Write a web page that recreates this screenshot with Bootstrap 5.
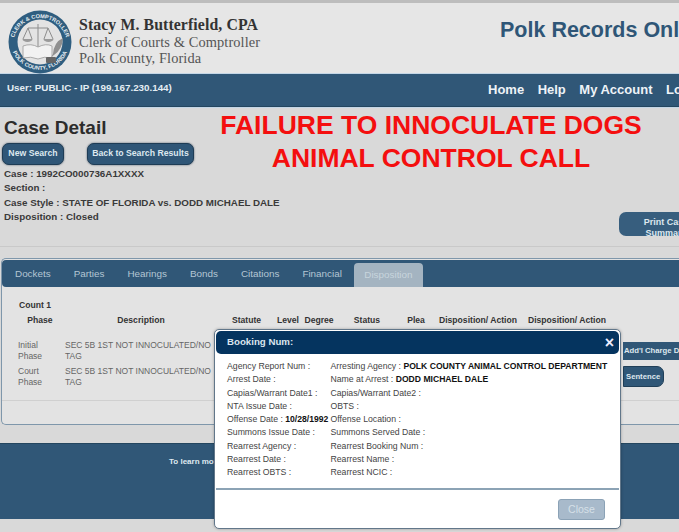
<!DOCTYPE html>
<html lang="en">
<head>
<meta charset="utf-8">
<title>Case Detail</title>
<link href="https://cdn.jsdelivr.net/npm/bootstrap@5.3.0/dist/css/bootstrap.min.css" rel="stylesheet">
<style>
html,body{height:532px;overflow:hidden}
body{background:#d9d9d9;font-family:"Liberation Sans",Arial,sans-serif;color:#333;width:679px;position:relative}
.top-strip{height:3px;background:#bdbdbd}
.site-head{height:71px;background:#e6e6e6;border-bottom:1px solid #c4d6e6}
.seal{width:64px;height:64px;margin:7px 7px 0 8px;flex:none}
.clerk{font-family:"Liberation Serif",serif;font-size:14.4px;line-height:16.7px;color:#555;padding-top:14px;letter-spacing:.1px}
.clerk b{color:#333;font-size:15.8px;letter-spacing:.1px}
.portal{font-size:21.5px;font-weight:700;color:#2f5677;position:absolute;left:500px;top:14px;white-space:nowrap}
.main-bar{height:33px;background:#305777;border-bottom:1px solid #24465f;color:#e4edf3;white-space:nowrap;overflow:hidden}
.user-line{font-size:9.8px;font-weight:700;padding:7px 0 0 7px;width:488px;flex:none}
.main-links{gap:13.5px;font-size:13px;font-weight:700;padding-top:6px;color:#eef3f7}
.main-links a{color:inherit;text-decoration:none}
.case-area{height:140px;padding:9px 0 0 4px;position:relative;border-bottom:1px solid #c9c9c9;border-top:1px solid #c4d6e6}
.case-area h1{font-size:19px;font-weight:700;color:#2c2c2c;margin:0 0 5px;line-height:21px}
.dark-btn{--bs-btn-padding-x:0;--bs-btn-padding-y:0;background:#2f5677;color:#dde8ef;border:1px solid #1e3c55;border-radius:7px;font-size:8.7px;font-weight:700;height:22px;box-shadow:0 0 2px #456;margin-right:23px}
.dark-btn:hover{background:#2f5677;color:#dde8ef}
.btn-new{width:62px;margin-left:-2px}
.btn-back{width:107px}
.case-lines{font-size:9.8px;font-weight:700;line-height:14.4px;margin-top:2px;color:#3a3a3a}
.print-btn{position:absolute;left:619px;top:104px;width:94px;height:24px;background:#375e7e;color:#dde8ef;font-size:9px;font-weight:700;line-height:11px;text-align:center;border-radius:7px 0 0 7px;padding-top:5px;overflow:hidden}
.alert-text{position:absolute;left:0;top:109px;width:862px;text-align:center;color:#f40f0f;font-size:26.5px;font-weight:700;line-height:32.5px;white-space:nowrap;pointer-events:none}
.alert-text span{display:block}
.panel-box{margin:11px 0 0 1px;height:167px;background:#e3e3e3;border:1px solid #7f97ab;border-right:0;border-radius:5px 0 0 5px;padding:1px 0 0 0;position:relative}
.tab-row{height:27px;background:#305777;border-radius:4px 0 0 4px;padding-left:13px;font-size:9.9px;color:#b4c6d4;white-space:nowrap;overflow:hidden;align-items:flex-end}
.tab-row a{color:inherit;text-decoration:none;display:block;padding-bottom:5px;margin-right:23px}
.tab-row a.on{margin-left:-11px;width:69px;height:24px;background:#a4b4c1;border-radius:4px 4px 0 0;color:#c8d4dd;text-align:center;padding:5px 0 0}
.count-title{font-size:8.6px;font-weight:700;margin:13px 0 0 17px;line-height:11px}
.charge-grid{width:612px;margin:3px 0 0 0;table-layout:fixed;--bs-table-bg:transparent;border-collapse:collapse}
.charge-grid th{font-size:8.6px;font-weight:700;text-align:center;padding:0;height:16px;border:0;color:#333;white-space:nowrap;vertical-align:top}
.charge-grid th:first-child{padding-left:13px}
.charge-grid td{font-size:8.5px;line-height:11px;padding:0;border:0;color:#666;vertical-align:top;height:26px}
.charge-grid .sp{height:10px}
.charge-grid td:first-child{padding-left:16px}
.grid-buttons{position:absolute;left:621px;top:83px;width:58px;font-size:7.7px;font-weight:700;color:#dfe8ef;white-space:nowrap}
.grid-buttons div{background:#305777;overflow:hidden}
.add-btn{height:18px;line-height:18px;padding-left:1px}
.sent-btn{height:21px;line-height:20px;width:41px;margin-top:6px;border-radius:0 7px 7px 0;border:1px solid #203f58;padding-left:2px}
.panel-rule{position:absolute;left:0;right:0;top:141px;border-top:1px solid #d0d0d0}
.site-foot{height:76px;margin-top:18px;background:#305777;border-top:1px solid #24465f;color:#dfe9f0;font-size:8px;font-weight:700;padding:12px 0 0 169px}
.booking{position:absolute;left:214px;top:329px;width:407px;height:200px;border:1px solid #62778a;border-radius:5px;background:#fff;box-shadow:0 0 3px rgba(0,0,0,.3);color:#444}
.booking .modal-header{height:23px;margin:1px 1px 0;background:#05345f;border:0;border-radius:5px;padding:0 5px 0 11px;color:#dce6ee;font-size:9.7px;font-weight:700}
.close-x{font-size:16px;font-weight:700;color:#eef;line-height:1}
.booking .modal-body{padding:6px 0 0 12px;font-size:8.7px;line-height:13.25px;height:132px;flex:none}
.booking-row{display:flex;white-space:nowrap}
.booking-row>span:first-child{width:103.5px;flex:none}
.booking b{color:#111;font-size:8.6px}
.booking .modal-footer{border-top:2px solid #8ca3b5;margin:2px 1px 0;padding:7px 14px 0 0;height:auto;display:block;text-align:right}
.close-modal{--bs-btn-padding-x:0;--bs-btn-padding-y:0;width:47px;height:21px;background:#a8bacb;border:1px solid #8ba2b6;border-radius:3px;color:#d6e0e8;font-size:10.5px}
.close-modal:hover{background:#a8bacb;color:#d6e0e8}
</style>
</head>
<body>
<div class="top-strip"></div>
<header class="site-head d-flex">
  <svg class="seal" viewBox="0 0 64 64" aria-label="Seal">
    <circle cx="32" cy="32" r="31.5" fill="#2f5e80"/>
    <circle cx="32" cy="32" r="22.5" fill="#e3e3e3"/>
    <defs><path id="arcTop" d="M5 35a27 27 0 0 1 54 0"/><path id="arcBot" d="M3.5 38a29.5 29.5 0 0 0 57 0"/></defs>
    <text font-size="5.6" font-weight="700" fill="#e8eef2" font-family="Liberation Sans"><textPath href="#arcTop" startOffset="50%" text-anchor="middle">CLERK &amp; COMPTROLLER</textPath></text>
    <text font-size="5.6" font-weight="700" fill="#e8eef2" font-family="Liberation Sans"><textPath href="#arcBot" startOffset="50%" text-anchor="middle">POLK COUNTY, FLORIDA</textPath></text>
    <path d="M30 14v26M20 18h20M20 18l-5 11M20 18l4 11M40 18l-4 11M40 18l5 11" stroke="#8d8d8d" stroke-width="1" fill="none"/>
    <path d="M14.5 29a5 3 0 0 0 10 0zM35.5 29a5 3 0 0 0 10 0z" fill="#9a9a9a"/>
    <path d="M15 36q8-3 15 1q8-4 14-1v12q-8-2-14 1q-7-3-15-1z" fill="#f2f2f2" stroke="#999" stroke-width=".8"/>
    <path d="M55 28q-9 4-10 16l-2 3 3-2q8-5 9-17z" fill="#8f8f8f"/>
    <rect x="38" y="47" width="10" height="6" rx="1" fill="#666"/>
  </svg>
  <div class="clerk"><b>Stacy M. Butterfield, CPA</b><br>Clerk of Courts &amp; Comptroller<br>Polk County, Florida</div>
</header>
<div class="portal">Polk Records Online</div>
<nav class="main-bar d-flex">
  <div class="user-line">User: PUBLIC - IP (199.167.230.144)</div>
  <div class="main-links d-flex"><a href="#">Home</a><a href="#">Help</a><a href="#">My Account</a><a href="#">Logout</a></div>
</nav>
<section class="case-area">
  <h1>Case Detail</h1>
  <div class="d-flex">
    <button type="button" class="btn dark-btn btn-new">New Search</button>
    <button type="button" class="btn dark-btn btn-back">Back to Search Results</button>
  </div>
  <div class="case-lines">Case : 1992CO000736A1XXXX<br>Section :<br>Case Style : STATE OF FLORIDA vs. DODD MICHAEL DALE<br>Disposition : Closed</div>
  <div class="print-btn">Print Case<br>Summary</div>
</section>
<section class="panel-box">
  <div class="tab-row d-flex">
    <a href="#">Dockets</a><a href="#">Parties</a><a href="#">Hearings</a><a href="#">Bonds</a><a href="#">Citations</a><a href="#">Financial</a><a href="#" class="on">Disposition</a>
  </div>
  <div class="count-title">Count 1</div>
  <table class="charge-grid">
    <colgroup><col style="width:63px"><col style="width:152px"><col style="width:59px"><col style="width:24px"><col style="width:38px"><col style="width:58px"><col style="width:40px"><col style="width:84px"><col style="width:94px"></colgroup>
    <thead><tr><th>Phase</th><th>Description</th><th>Statute</th><th>Level</th><th>Degree</th><th>Status</th><th>Plea</th><th>Disposition/ Action</th><th>Disposition/ Action</th></tr></thead>
    <tbody>
      <tr><td class="sp" colspan="9"></td></tr>
      <tr><td>Initial<br>Phase</td><td colspan="8">SEC 5B 1ST NOT INNOCULATED/NO<br>TAG</td></tr>
      <tr><td>Court<br>Phase</td><td colspan="8">SEC 5B 1ST NOT INNOCULATED/NO<br>TAG</td></tr>
    </tbody>
  </table>
  <div class="grid-buttons"><div class="add-btn">Add'l Charge Data</div><div class="sent-btn">Sentence</div></div>
  <div class="panel-rule"></div>
</section>
<footer class="site-foot">To learn more</footer>
<div class="alert-text"><span>FAILURE TO INNOCULATE DOGS</span><span>ANIMAL CONTROL CALL</span></div>
<div class="booking modal-content">
  <div class="modal-header d-flex justify-content-between align-items-center"><span>Booking Num:</span><span class="close-x">×</span></div>
  <div class="modal-body">
    <div class="booking-row"><span>Agency Report Num :</span><span>Arresting Agency : <b>POLK COUNTY ANIMAL CONTROL DEPARTMENT</b></span></div>
    <div class="booking-row"><span>Arrest Date :</span><span>Name at Arrest : <b>DODD MICHAEL DALE</b></span></div>
    <div class="booking-row"><span>Capias/Warrant Date1 :</span><span>Capias/Warrant Date2 :</span></div>
    <div class="booking-row"><span>NTA Issue Date :</span><span>OBTS :</span></div>
    <div class="booking-row"><span>Offense Date : <b>10/28/1992</b></span><span>Offense Location :</span></div>
    <div class="booking-row"><span>Summons Issue Date :</span><span>Summons Served Date :</span></div>
    <div class="booking-row"><span>Rearrest Agency :</span><span>Rearrest Booking Num :</span></div>
    <div class="booking-row"><span>Rearrest Date :</span><span>Rearrest Name :</span></div>
    <div class="booking-row"><span>Rearrest OBTS :</span><span>Rearrest NCIC :</span></div>
  </div>
  <div class="modal-footer"><button type="button" class="btn close-modal">Close</button></div>
</div>
<script src="https://cdn.jsdelivr.net/npm/bootstrap@5.3.0/dist/js/bootstrap.bundle.min.js"></script>
</body>
</html>
